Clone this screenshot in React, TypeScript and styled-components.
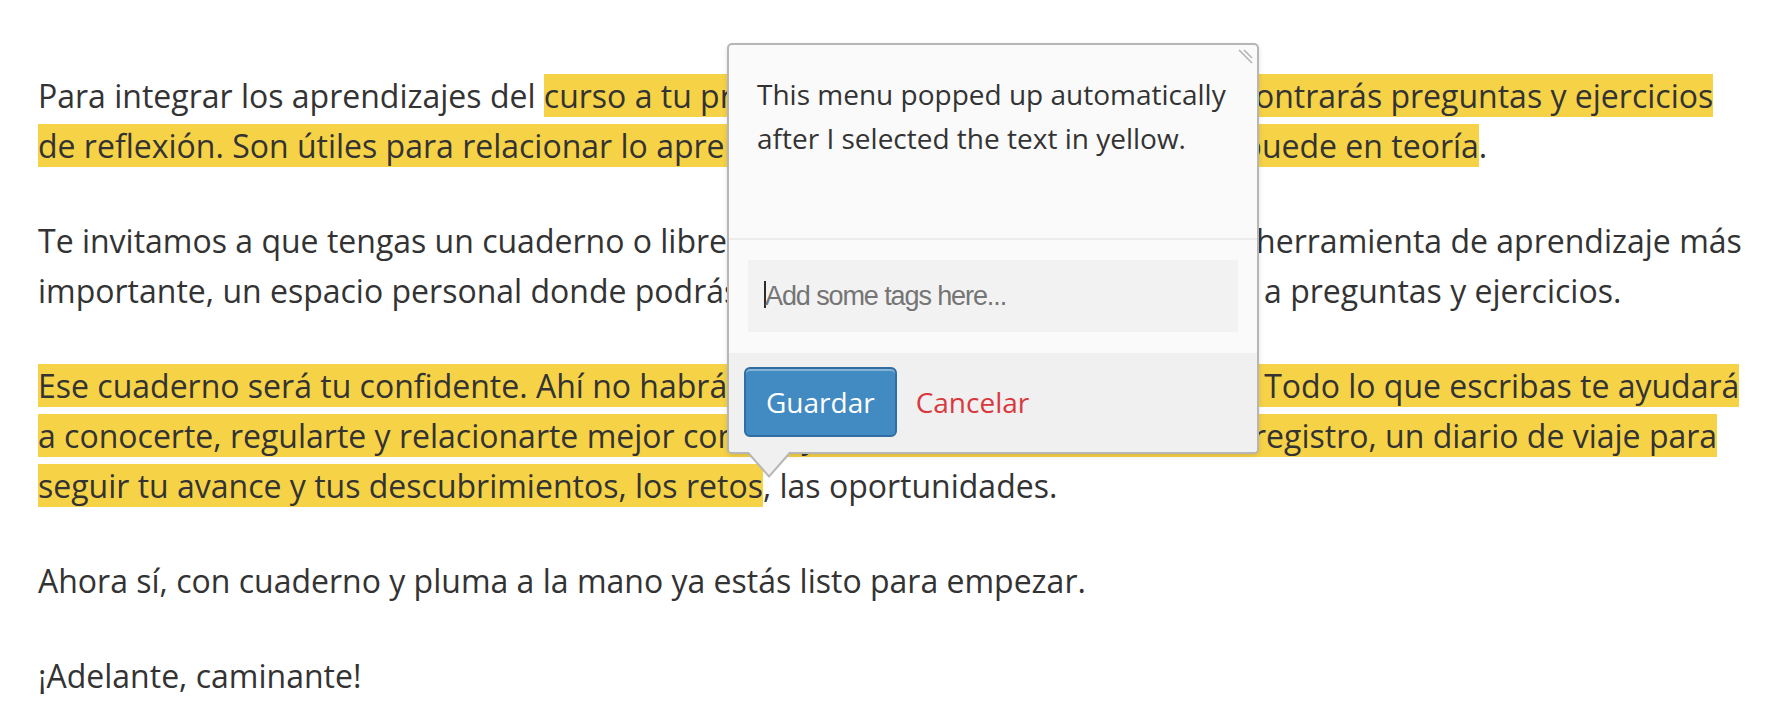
import React from "react";
import styled, { createGlobalStyle } from "styled-components";

const GlobalStyle = createGlobalStyle`
  html, body {
    margin: 0;
    padding: 0;
    background: #ffffff;
  }
  body {
    font-family: "Open Sans", "Noto Sans", sans-serif;
  }
`;

const Page = styled.div`
  position: relative;
  box-sizing: border-box;
  width: 1782px;
  height: 726px;
  overflow: hidden;
  padding: 71px 28px 0 38px;
  background: #ffffff;
`;

const Paragraph = styled.p`
  margin: 0 0 45px;
  font-family: "Open Sans", "Noto Sans", sans-serif;
  font-size: 32px;
  line-height: 50px;
  color: #333333;
`;

const Highlight = styled.span`
  background: #f6d247;
`;

const Editor = styled.div`
  position: absolute;
  left: 727px;
  top: 43px;
  width: 532px;
  box-sizing: border-box;
  border: 2px solid #b6b6b6;
  border-radius: 5px;
  background: #fafafa;
  box-shadow: 0 2px 5px rgba(0, 0, 0, 0.12);
  font-family: "Open Sans", "Noto Sans", sans-serif;

  &::before {
    content: "";
    position: absolute;
    left: 17px;
    top: 100%;
    width: 0;
    height: 0;
    border-left: 23px solid transparent;
    border-right: 23px solid transparent;
    border-top: 26px solid #b6b6b6;
  }

  &::after {
    content: "";
    position: absolute;
    left: 19px;
    top: calc(100% - 1px);
    width: 0;
    height: 0;
    border-left: 21px solid transparent;
    border-right: 21px solid transparent;
    border-top: 24px solid #f0f0f0;
  }
`;

const ResizeHandle = styled.svg`
  position: absolute;
  right: 4px;
  top: 4px;
  width: 16px;
  height: 16px;
`;

const Message = styled.div`
  box-sizing: border-box;
  height: 193px;
  padding: 27px 28px 0;
  font-size: 28px;
  line-height: 44px;
  color: #333333;
`;

const Divider = styled.div`
  height: 0;
  border-top: 2px solid #ececec;
`;

const TagsField = styled.div`
  padding: 20px 19px 21px;
`;

const TagsInput = styled.div`
  display: flex;
  align-items: center;
  box-sizing: border-box;
  height: 72px;
  padding: 0 16px;
  background: #f2f2f2;
`;

const Caret = styled.span`
  display: block;
  flex: none;
  width: 2px;
  height: 27px;
  margin-top: -4px;
  margin-right: -1px;
  background: #2b2b2b;
`;

const Placeholder = styled.span`
  font-family: "Liberation Sans", Arial, sans-serif;
  font-size: 27px;
  letter-spacing: -1.1px;
  line-height: 67px;
  color: #757575;
`;

const Controls = styled.div`
  display: flex;
  align-items: center;
  gap: 19px;
  padding: 14px 15px 15px;
  background: #f0f0f0;
  border-radius: 0 0 3px 3px;
`;

const SaveButton = styled.button`
  box-sizing: border-box;
  height: 70px;
  padding: 0 20px;
  border: 2px solid #2f6da3;
  border-radius: 6px;
  background: #428bc2;
  box-shadow: inset 0 2px 0 rgba(255, 255, 255, 0.35);
  font-family: "Open Sans", "Noto Sans", sans-serif;
  font-size: 28px;
  line-height: 64px;
  color: #ffffff;
  cursor: pointer;
`;

const CancelLink = styled.a`
  font-family: "Open Sans", "Noto Sans", sans-serif;
  font-size: 28px;
  line-height: 40px;
  color: #d9383e;
  text-decoration: none;
  cursor: pointer;
`;

export default function App() {
  return (
    <>
      <GlobalStyle />
      <Page>
        <Paragraph>
          Para integrar los aprendizajes del{" "}
          <Highlight>
            curso a tu práctica habitual, en cada lección encontrarás preguntas y ejercicios de
            reflexión. Son útiles para relacionar lo aprendido con tu día, más de lo que se puede
            en teoría
          </Highlight>
          .
        </Paragraph>
        <Paragraph>
          Te invitamos a que tengas un cuaderno o libreta a la mano, porque será tu nueva
          herramienta de aprendizaje más importante, un espacio personal donde podrás escribir
          libremente tus respuestas a preguntas y ejercicios.
        </Paragraph>
        <Paragraph>
          <Highlight>
            Ese cuaderno será tu confidente. Ahí no habrá respuestas correctas o incorrectas. Todo
            lo que escribas te ayudará a conocerte, regularte y relacionarte mejor contigo y con el
            mundo. Será como tu registro, un diario de viaje para seguir tu avance y tus
            descubrimientos, los retos
          </Highlight>
          , las oportunidades.
        </Paragraph>
        <Paragraph>Ahora sí, con cuaderno y pluma a la mano ya estás listo para empezar.</Paragraph>
        <Paragraph>¡Adelante, caminante!</Paragraph>

        <Editor>
          <ResizeHandle viewBox="0 0 16 16">
            <line x1="2" y1="1" x2="15" y2="14" stroke="#b4b4b4" strokeWidth="1.6" />
            <line x1="7" y1="1" x2="15" y2="9" stroke="#b4b4b4" strokeWidth="1.6" />
          </ResizeHandle>
          <Message>
            This menu popped up automatically after I selected the text in yellow.
          </Message>
          <Divider />
          <TagsField>
            <TagsInput>
              <Caret />
              <Placeholder>Add some tags here...</Placeholder>
            </TagsInput>
          </TagsField>
          <Controls>
            <SaveButton type="button">Guardar</SaveButton>
            <CancelLink>Cancelar</CancelLink>
          </Controls>
        </Editor>
      </Page>
    </>
  );
}
